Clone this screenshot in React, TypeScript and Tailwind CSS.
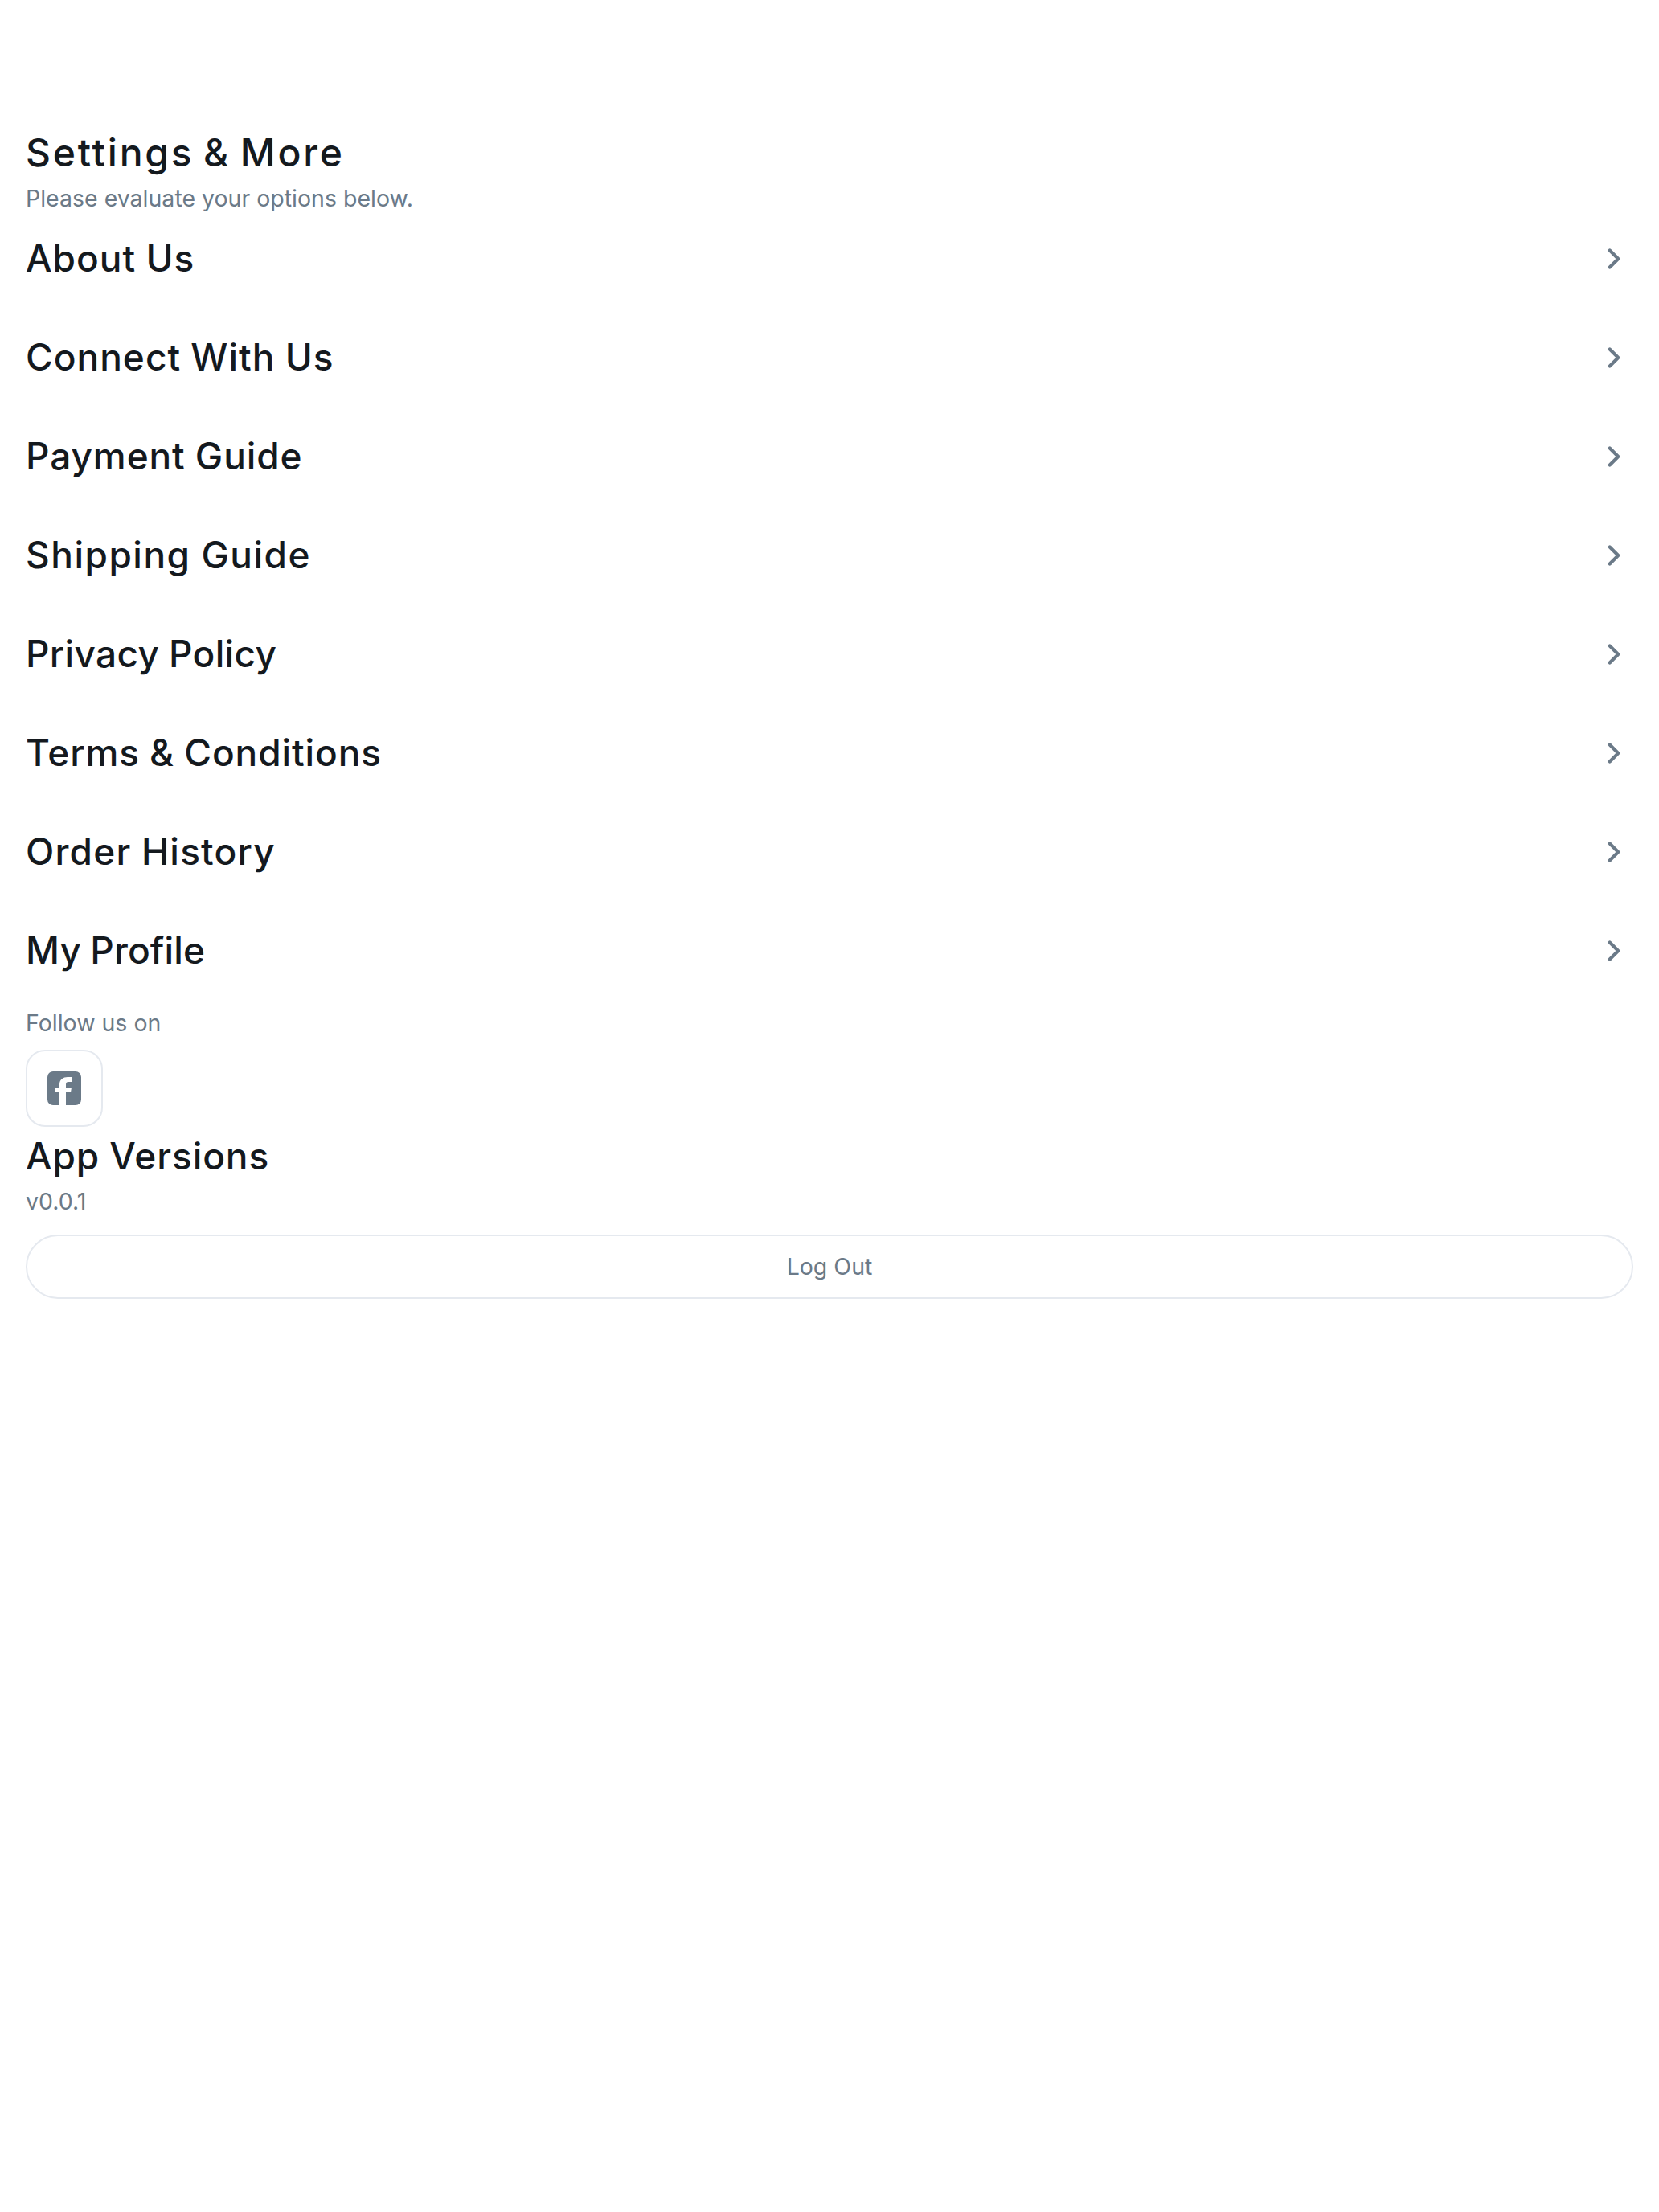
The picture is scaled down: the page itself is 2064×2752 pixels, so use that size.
import { ChevronRight } from "lucide-react";

const items = [
  { label: "About Us", tracking: "tracking-[1px]" },
  { label: "Connect With Us", tracking: "tracking-[1px]" },
  { label: "Payment Guide", tracking: "tracking-[0.9px]" },
  { label: "Shipping Guide", tracking: "tracking-[1.5px]" },
  { label: "Privacy Policy", tracking: "tracking-[0.35px]" },
  { label: "Terms & Conditions", tracking: "tracking-[0.9px]" },
  { label: "Order History", tracking: "tracking-[1.2px]" },
  { label: "My Profile", tracking: "tracking-[0.1px]" },
];

export default function App() {
  return (
    <div className="min-h-[2752px] bg-white px-8 pt-[154px] font-['Inter',sans-serif]">
      <h1 className="text-[48px] leading-[72px] font-medium tracking-[2.8px] [word-spacing:-4px] text-[#14191e]">Settings &amp; More</h1>
      <p className="mt-2 text-[28.5px] leading-[26px] text-[#6b7a88]">Please evaluate your options below.</p>
      <ul className="flex flex-col pb-2">
        {items.map((t) => (
          <li key={t.label} className="flex h-[123px] items-center justify-between">
            <span className={`text-[46px] font-medium [word-spacing:-1px] text-[#14191e] ${t.tracking}`}>{t.label}</span>
            <ChevronRight className="mr-[3px] h-[42px] w-[42px] text-[#6b7a88]" strokeWidth={2.4} />
          </li>
        ))}
      </ul>
      <p className="text-[28.5px] leading-[42px] text-[#6b7a88]">Follow us on</p>
      <div className="mt-3 flex h-24 w-24 items-center justify-center rounded-3xl border-2 border-[#e5e9ef]">
        <svg viewBox="0 0 42 42" className="h-[42px] w-[42px]">
          <path fill="#6b7a88" d="M7 0h28a7 7 0 0 1 7 7v28a7 7 0 0 1-7 7h-12V26h6l1-6h-7v-4c0-2 1-3 3-3h4V7h-5c-5 0-10 3-10 9v4h-5v6h5v16H7a7 7 0 0 1-7-7V7a7 7 0 0 1 7-7z" />
        </svg>
      </div>
      <h2 className="text-[46px] leading-[72px] font-medium tracking-[0.9px] [word-spacing:-1px] text-[#14191e]">App Versions</h2>
      <p className="text-[28.5px] leading-[42px] text-[#6b7a88]">v0.0.1</p>
      <button className="mt-5 flex h-20 w-full items-center justify-center rounded-full border-2 border-[#e5e9ef] text-[28.5px] text-[#6b7a88]">Log Out</button>
    </div>
  );
}
